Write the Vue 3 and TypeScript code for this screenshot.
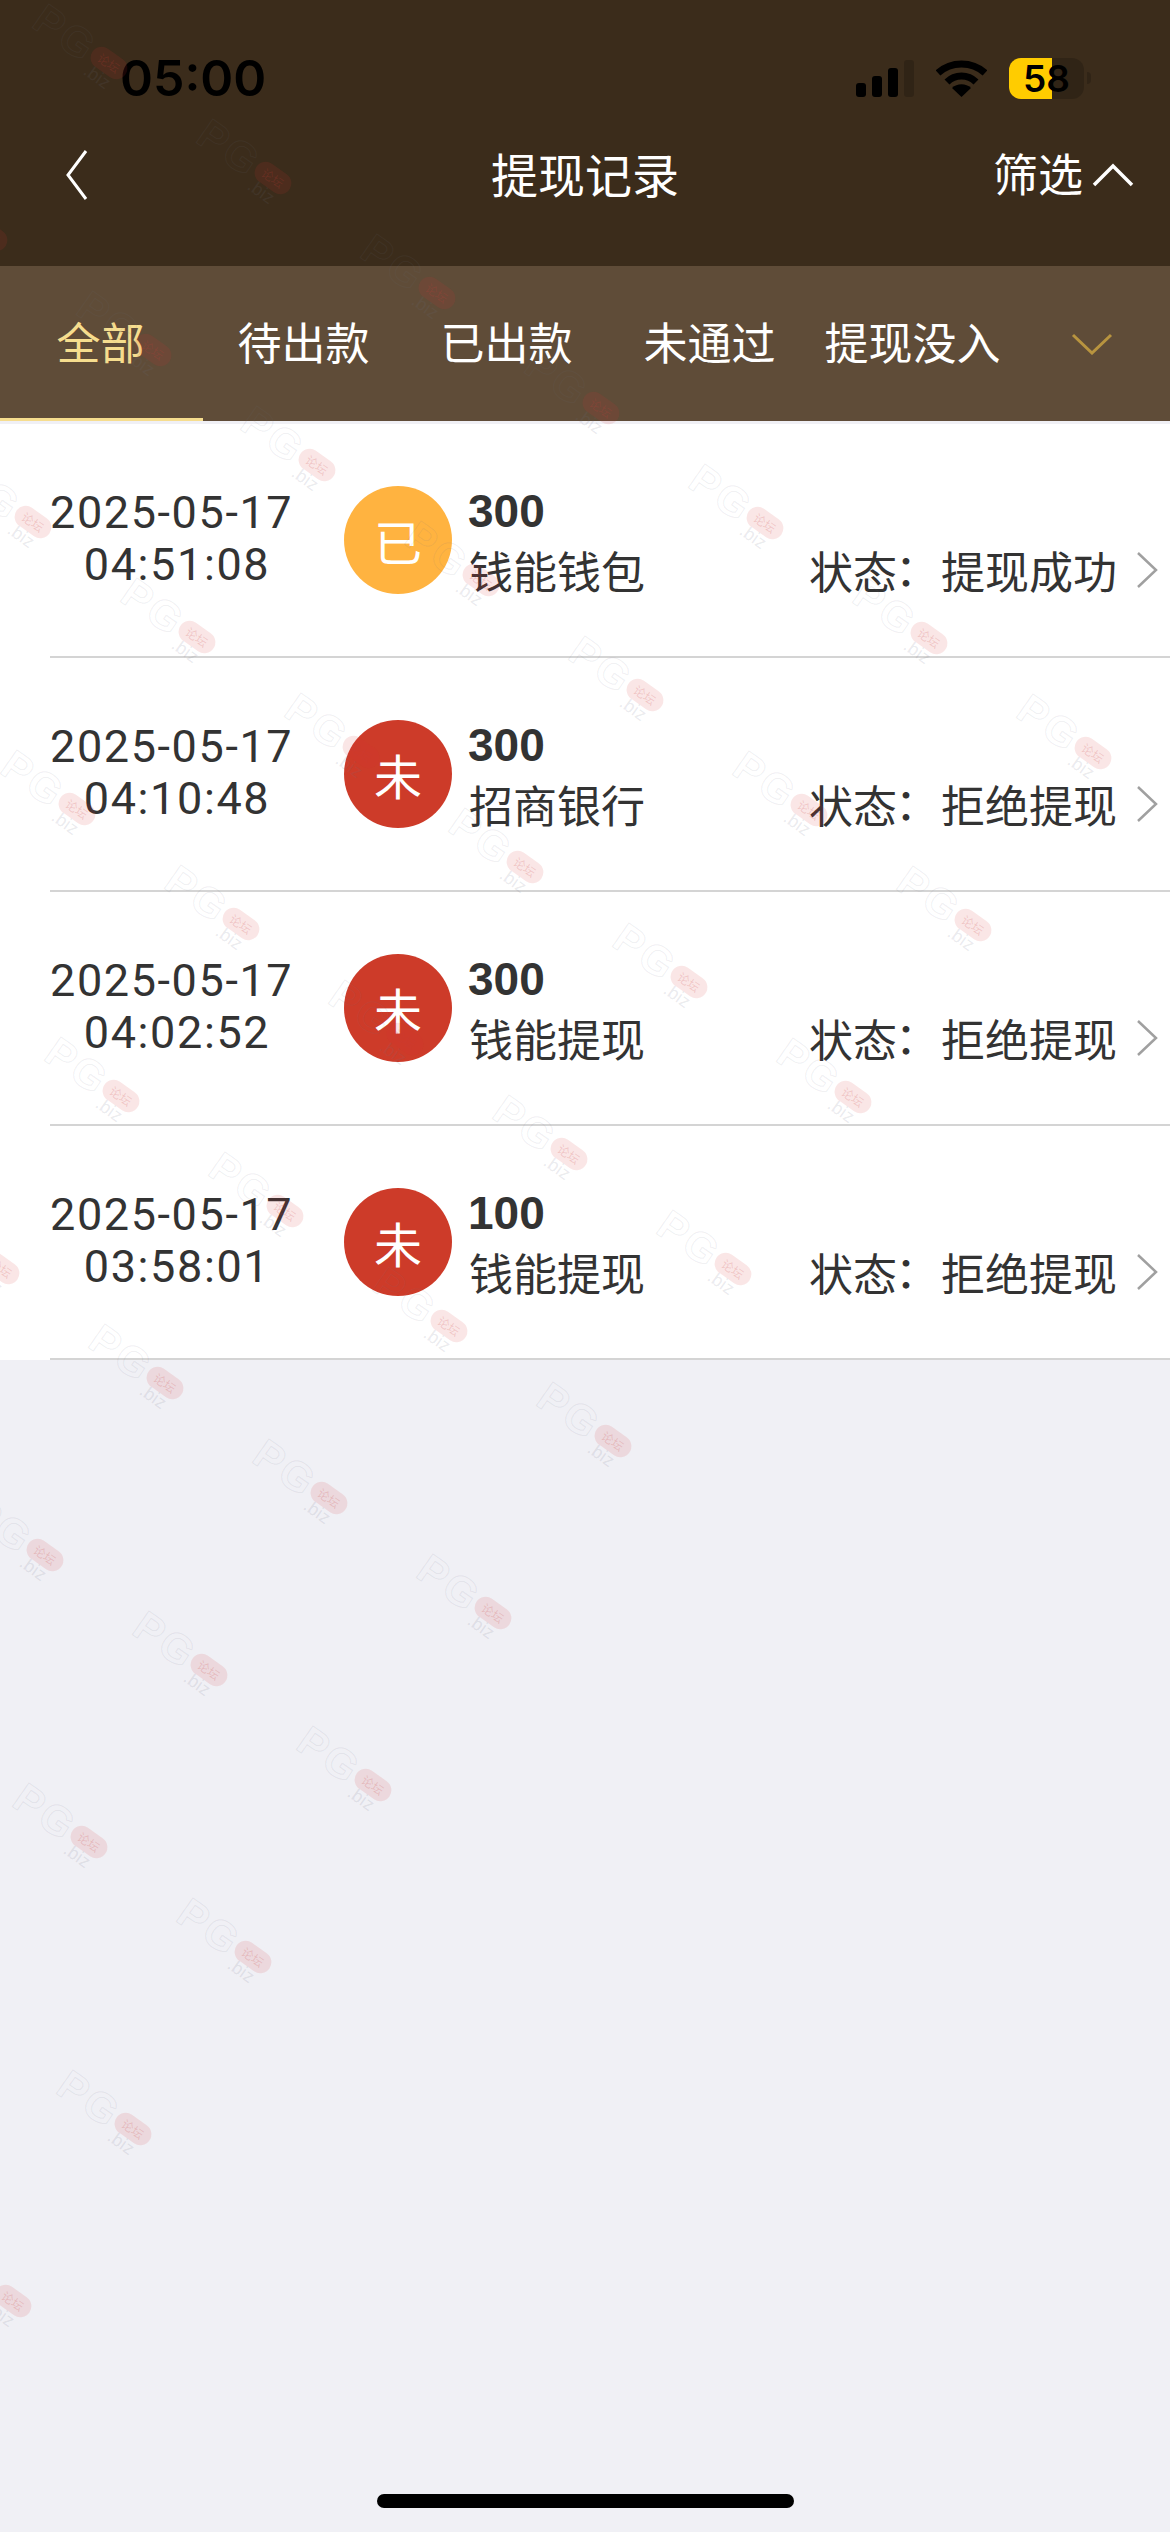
<script setup lang="ts">
interface Record {
  date: string
  time: string
  badge: string
  tone: 'done' | 'fail'
  amount: string
  name: string
  status: string
}

const tabs = ['全部', '待出款', '已出款', '未通过', '提现没入']

const records: Record[] = [
  { date: '2025-05-17', time: '04:51:08', badge: '已', tone: 'done', amount: '300', name: '钱能钱包', status: '提现成功' },
  { date: '2025-05-17', time: '04:10:48', badge: '未', tone: 'fail', amount: '300', name: '招商银行', status: '拒绝提现' },
  { date: '2025-05-17', time: '04:02:52', badge: '未', tone: 'fail', amount: '300', name: '钱能提现', status: '拒绝提现' },
  { date: '2025-05-17', time: '03:58:01', badge: '未', tone: 'fail', amount: '100', name: '钱能提现', status: '拒绝提现' },
]

// watermark lattice, anchored on the capsule of one mark; it stops at m = 2 and n = -5
const marks: { x: number; y: number }[] = []
for (let m = -4; m <= 2; m++) {
  for (let n = -5; n <= 6; n++) {
    const x = 165 + m * 164 - n * 120
    const y = 1383 + m * 115 + n * 172
    if (x > -30 && x < 1230 && y > -30 && y < 2560) marks.push({ x, y })
  }
}
</script>

<template>
  <div class="page">
    <header class="head">
      <div class="status-bar">
        <span class="clock">05:00</span>
        <div class="indicators">
          <svg class="signal" width="58" height="37" viewBox="0 0 58 37">
            <rect x="0" y="23" width="10" height="14" rx="3" fill="#000" />
            <rect x="16" y="16" width="10" height="21" rx="3" fill="#000" />
            <rect x="32" y="8" width="10" height="29" rx="3" fill="#000" />
            <rect x="48" y="0" width="10" height="37" rx="3" fill="#000" opacity="0.18" />
          </svg>
          <svg class="wifi" width="51" height="37" viewBox="0 0 51 37">
            <path d="M2 13 C15 1 36 1 49 13" fill="none" stroke="#000" stroke-width="7" />
            <path d="M11 22 C19 14 32 14 40 22" fill="none" stroke="#000" stroke-width="7" />
            <path d="M25.5 37 L16 28 C21 23 30 23 35 28 Z" fill="#000" />
          </svg>
          <div class="battery">
            <div class="battery-fill"></div>
            <span class="battery-num">58</span>
          </div>
          <div class="battery-tip"></div>
        </div>
      </div>
      <nav class="nav">
        <svg class="back" width="24" height="52" viewBox="0 0 24 52">
          <path d="M21 2 L3 26 L21 50" fill="none" stroke="#fff" stroke-width="3" />
        </svg>
        <span class="title">提现记录</span>
        <div class="filter">
          <span>筛选</span>
          <svg width="42" height="24" viewBox="0 0 42 24">
            <path d="M2 22 L21 3 L40 22" fill="none" stroke="#fff" stroke-width="3.5" />
          </svg>
        </div>
      </nav>
    </header>

    <div class="tabs">
      <div v-for="(tab, i) in tabs" :key="tab" :class="['tab', { active: i === 0 }]">{{ tab }}</div>
      <div class="tab-more">
        <svg width="42" height="22" viewBox="0 0 42 22">
          <path d="M2 2 L21 20 L40 2" fill="none" stroke="#b8943f" stroke-width="3" />
        </svg>
      </div>
    </div>

    <ul class="list">
      <li v-for="item in records" :key="item.time" class="row">
        <div class="row-inner">
          <div class="when">
            <div>{{ item.date }}</div>
            <div class="when-time">{{ item.time }}</div>
          </div>
          <div :class="['badge', item.tone]">{{ item.badge }}</div>
          <div class="info">
            <div class="amount">{{ item.amount }}</div>
            <div class="info-bottom">
              <span class="name">{{ item.name }}</span>
              <div class="state">
                <span class="state-label">状态<span class="colon">：</span></span>
                <span>{{ item.status }}</span>
                <svg class="arrow" width="22" height="36" viewBox="0 0 22 36">
                  <path d="M2 1 L20 18 L2 35" fill="none" stroke="#a0a0a0" stroke-width="2.5" />
                </svg>
              </div>
            </div>
          </div>
        </div>
      </li>
    </ul>

    <div class="home-bar"></div>

    <div class="watermarks">
      <div
        v-for="(mark, i) in marks"
        :key="i"
        class="mark"
        :style="{ left: mark.x - 90 + 'px', top: mark.y - 30 + 'px' }"
      >
        <span class="mark-p">P</span>
        <span class="mark-g">G</span>
        <span class="mark-pill">论坛</span>
        <span class="mark-biz">.biz</span>
      </div>
    </div>
  </div>
</template>

<style>
html,
body {
  margin: 0;
  background: #f0f0f5;
}
</style>

<style scoped>
.page {
  position: relative;
  width: 1170px;
  height: 2532px;
  overflow: hidden;
  background: #f0f0f5;
  font-family: "Noto Sans CJK SC", "Liberation Sans", sans-serif;
  color: #333;
}

.head {
  height: 266px;
  background: #3b2c1b;
}

.status-bar {
  display: flex;
  align-items: center;
  justify-content: space-between;
  box-sizing: border-box;
  height: 130px;
  padding: 26px 79px 0 120px;
}

.clock {
  font-family: Inter, "Liberation Sans", sans-serif;
  font-size: 50px;
  font-weight: 600;
  color: #000;
  line-height: 1;
}

.indicators {
  display: flex;
  align-items: center;
}

.wifi {
  margin-left: 22px;
}

.battery {
  position: relative;
  width: 75px;
  height: 41px;
  margin-left: 22px;
  border-radius: 12px;
  overflow: hidden;
  background: rgba(0, 0, 0, 0.18);
}

.battery-fill {
  width: 43px;
  height: 100%;
  background: #ffcc00;
}

.battery-num {
  position: absolute;
  inset: 0;
  display: flex;
  align-items: center;
  justify-content: center;
  font-family: Inter, "Liberation Sans", sans-serif;
  font-size: 37px;
  font-weight: 600;
  color: #000;
}

.battery-tip {
  width: 4px;
  height: 12px;
  margin-left: 3px;
  border-radius: 0 4px 4px 0;
  background: rgba(0, 0, 0, 0.18);
}

.nav {
  position: relative;
  display: flex;
  align-items: center;
  justify-content: space-between;
  height: 90px;
  padding: 0 36px 0 65px;
  color: #fff;
}

.title {
  position: absolute;
  left: 0;
  right: 0;
  padding-bottom: 5px;
  text-align: center;
  font-size: 47px;
}

.filter {
  display: flex;
  align-items: center;
  gap: 9px;
  font-size: 45px;
}

.filter span {
  padding-bottom: 5px;
}

.tabs {
  display: flex;
  height: 155px;
  background: #5f4c38;
}

.tab {
  display: flex;
  align-items: center;
  justify-content: center;
  box-sizing: border-box;
  width: 203px;
  padding: 0 2px 2px 0;
  border-bottom: 3px solid transparent;
  font-size: 44px;
  color: #fff;
  white-space: nowrap;
}

.tab.active {
  border-bottom-color: #f6dd8e;
  color: #f6dd8e;
}

.tab-more {
  display: flex;
  flex: 1;
  align-items: center;
  justify-content: flex-end;
  padding: 0 57px 0 0;
}

.list {
  margin: 3px 0 0;
  padding: 0;
  list-style: none;
  background: #fff;
}

.row {
  padding-left: 50px;
}

.row-inner {
  display: flex;
  align-items: center;
  box-sizing: border-box;
  height: 234px;
  border-bottom: 2px solid #d4d4d4;
}

.when {
  width: 242px;
  padding-bottom: 2px;
  font-family: Roboto, "Liberation Sans", sans-serif;
  text-align: center;
  font-size: 45px;
  line-height: 52px;
  letter-spacing: 1.6px;
  white-space: nowrap;
}

.when-time {
  padding-left: 12px;
}

.badge {
  display: flex;
  flex-shrink: 0;
  align-items: center;
  justify-content: center;
  width: 108px;
  height: 108px;
  margin-left: 52px;
  border-radius: 50%;
  font-size: 48px;
  color: #fff;
}

.badge.done {
  background: #ffb340;
}

.badge.fail {
  background: #cd3b29;
}

.info {
  flex: 1;
  margin-left: 16px;
}

.amount {
  padding-top: 2px;
  font-family: "Liberation Sans", sans-serif;
  font-size: 46px;
  font-weight: 700;
  line-height: 58px;
}

.info-bottom {
  display: flex;
  align-items: center;
  justify-content: space-between;
  height: 60px;
  padding-right: 12px;
  font-size: 44px;
  line-height: 60px;
}

.name {
  padding-left: 1px;
}

.state {
  display: flex;
  align-items: center;
}

.state-label {
  width: 132px;
}

.colon {
  display: inline-block;
  margin: 0 13px 0 -13px;
  font-family: "Noto Sans CJK TC", sans-serif;
}

.arrow {
  margin-left: 19px;
}

.home-bar {
  position: absolute;
  left: 377px;
  bottom: 24px;
  width: 417px;
  height: 14px;
  border-radius: 7px;
  background: #000;
}

.watermarks {
  position: absolute;
  inset: 0;
  pointer-events: none;
}

.mark {
  position: absolute;
  width: 120px;
  height: 60px;
  transform: rotate(35deg);
  transform-origin: 90px 30px;
}

.mark-p,
.mark-g {
  position: absolute;
  top: 10px;
  font-family: "Liberation Sans", sans-serif;
  font-size: 42px;
  font-weight: 700;
  line-height: 1;
  color: transparent;
  -webkit-text-stroke: 1px rgba(110, 110, 130, 0.11);
}

.mark-p {
  left: 4px;
}

.mark-g {
  left: 35px;
}

.mark-pill {
  position: absolute;
  top: 19px;
  left: 70px;
  width: 40px;
  height: 22px;
  border-radius: 11px;
  background: rgba(215, 50, 50, 0.12);
  font-size: 12px;
  line-height: 22px;
  text-align: center;
  color: rgba(200, 60, 60, 0.2);
}

.mark-biz {
  position: absolute;
  top: 39px;
  left: 74px;
  font-family: "Liberation Sans", sans-serif;
  font-size: 18px;
  line-height: 1;
  color: rgba(110, 110, 130, 0.14);
}
</style>
